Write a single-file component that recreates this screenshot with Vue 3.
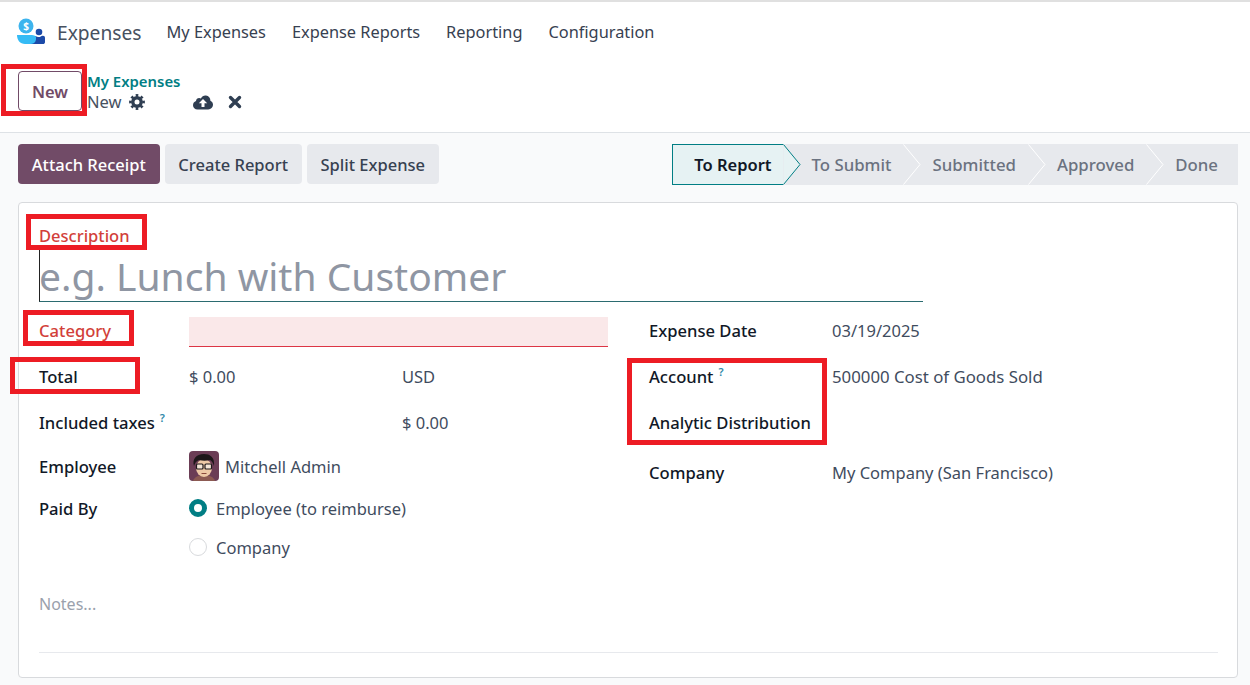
<script setup>
const steps = [
  { label: 'To Report', active: true },
  { label: 'To Submit' },
  { label: 'Submitted' },
  { label: 'Approved' },
  { label: 'Done', last: true },
]
const navItems = ['My Expenses', 'Expense Reports', 'Reporting', 'Configuration']
</script>

<template>
  <div class="page">
    <header class="navbar">
      <svg class="logo" viewBox="0 0 30 28" width="30" height="28" aria-hidden="true">
        <circle cx="10" cy="9" r="7.500" fill="#3db4ee" />
        <text x="10" y="12.500" text-anchor="middle" class="logo-s">$</text>
        <path d="M19 19c1 0 2 .8 3 1 2 .4 3-.8 4.500-1.200 1.500-.3 2.500.7 2.500 2V25c0 1.500-1 2-2 2H14z" fill="#1c4aa8" />
        <path d="M1 18h15c1.800 0 3 .8 4 1.800v2c0 3-2 5.200-5 5.200H9c-5 0-8-4-8-9z" fill="#35bbf5" />
        <circle cx="23" cy="15" r="3.300" fill="#1c4aa8" />
      </svg>
      <span class="app-name">Expenses</span>
      <nav class="nav-list">
        <a v-for="item in navItems" :key="item" class="nav-item">{{ item }}</a>
      </nav>
    </header>

    <section class="control-panel">
      <button class="btn-new">New</button>
      <div class="crumbs">
        <a class="crumb-link">My Expenses</a>
        <div class="crumb-current">
          <span>New</span>
          <svg class="ic-gear" viewBox="0 0 16 16" width="16" height="16" aria-hidden="true">
            <circle cx="8" cy="8" r="4.200" fill="none" stroke="#2f3e52" stroke-width="3.400" />
            <circle cx="8" cy="8" r="6.600" fill="none" stroke="#2f3e52" stroke-width="2.600" pathLength="32" stroke-dasharray="2 2" stroke-dashoffset="1" />
          </svg>
          <svg class="ic-cloud" viewBox="0 0 20 15" width="20" height="15" aria-hidden="true">
            <path d="M4.500 14.500C2 14.500 0 12.600 0 10.200c0-1.900 1.200-3.500 3-4.100C3.100 4.300 4.500 3 6.200 3c.6 0 1.200.2 1.700.5C8.900 1.500 10.800.2 13 .5c2.700.3 4.500 2.500 4.400 5.200 1.600.7 2.600 2.200 2.600 3.900 0 2.700-2.100 4.900-4.800 4.900z" fill="#2f3e52" />
            <path d="M10 4l4.200 4.200h-2.700V12h-3V8.200H5.800z" fill="#fff" />
          </svg>
          <svg class="ic-close" viewBox="0 0 14 14" width="14" height="14" aria-hidden="true">
            <path d="M2.500 2.500l9 9M11.500 2.500l-9 9" stroke="#2f3e52" stroke-width="3.400" stroke-linecap="round" />
          </svg>
        </div>
      </div>
    </section>

    <main class="content">
      <div class="toolbar">
        <div class="actions">
          <button class="btn btn-primary">Attach Receipt</button>
          <button class="btn">Create Report</button>
          <button class="btn">Split Expense</button>
        </div>
        <div class="statusbar">
          <div
            v-for="step in steps"
            :key="step.label"
            class="step"
            :class="{ 'step-active': step.active, 'step-last': step.last }"
          >
            <span>{{ step.label }}</span>
            <svg v-if="!step.last" class="chev" viewBox="0 0 18 41" width="18" height="41" aria-hidden="true">
              <path
                d="M0.500 0.500L17 20.500L0.500 40.500"
                :fill="step.active ? '#e6f2f3' : '#e7e9ed'"
                :stroke="step.active ? '#017e84' : '#ffffff'"
                stroke-width="1"
              />
            </svg>
          </div>
        </div>
      </div>

      <article class="sheet">
        <label class="title-label">Description</label>
        <div class="title-field">
          <input class="title-input" placeholder="e.g. Lunch with Customer" />
        </div>

        <div class="form-groups">
          <div class="group group-left">
            <div class="row row-46">
              <span class="label label-error">Category</span>
              <div class="input-error"></div>
            </div>
            <div class="row row-46">
              <span class="label">Total</span>
              <div class="amounts"><span class="amount">$ 0.00</span><span>USD</span></div>
            </div>
            <div class="row row-46">
              <span class="label">Included taxes<sup class="help">?</sup></span>
              <div class="amounts"><span class="amount"></span><span>$ 0.00</span></div>
            </div>
            <div class="row row-42">
              <span class="label">Employee</span>
              <div class="employee">
                <svg class="avatar" viewBox="0 0 30 30" width="30" height="30" aria-hidden="true">
                  <rect width="30" height="30" rx="4" fill="#6b3d55" />
                  <path d="M4 30c1-4 6-6 11-6s10 2 11 6z" fill="#8c5a52" />
                  <ellipse cx="15" cy="17" rx="8" ry="9" fill="#eec9a6" />
                  <path d="M5 15C3 8 7 3 15 3c6 0 11 3 10 12-1-3-2-5-4-6-4 1-7 1-11 0-3 1-4 3-5 6z" fill="#1d1719" />
                  <rect x="7.500" y="13" width="6.500" height="5" rx="1" fill="#f5e6d6" stroke="#1d1719" stroke-width="1.200" />
                  <rect x="16" y="13" width="6.500" height="5" rx="1" fill="#f5e6d6" stroke="#1d1719" stroke-width="1.200" />
                  <path d="M12.500 22.500h5" stroke="#8a4a3c" stroke-width="1" />
                </svg>
                <span>Mitchell Admin</span>
              </div>
            </div>
            <div class="row row-42">
              <span class="label">Paid By</span>
              <label class="radio-line"><i class="radio radio-on"></i>Employee (to reimburse)</label>
            </div>
            <div class="row row-36">
              <span></span>
              <label class="radio-line"><i class="radio"></i>Company</label>
            </div>
          </div>

          <div class="group group-right">
            <div class="row row-46">
              <span class="label">Expense Date</span>
              <span>03/19/2025</span>
            </div>
            <div class="row row-46">
              <span class="label">Account<sup class="help">?</sup></span>
              <span class="wide-value">500000 Cost of Goods Sold</span>
            </div>
            <div class="row row-46">
              <span class="label">Analytic Distribution</span>
              <span></span>
            </div>
            <div class="row row-54">
              <span class="label">Company</span>
              <span>My Company (San Francisco)</span>
            </div>
          </div>
        </div>

        <div class="notes">Notes...</div>
      </article>
    </main>

    <div class="mark mark-new"></div>
    <div class="mark mark-description"></div>
    <div class="mark mark-category"></div>
    <div class="mark mark-total"></div>
    <div class="mark mark-account"></div>
  </div>
</template>

<style>
html, body { margin: 0; background: #f9fafb; }
</style>

<style scoped>
.page {
  position: relative;
  width: 1250px;
  height: 685px;
  overflow: hidden;
  box-sizing: border-box;
  border-top: 2px solid #e0e0e0;
  background: #f9fafb;
  font-family: "Noto Sans", "Open Sans", sans-serif;
  font-size: 16.500px;
  color: #3f4c5e;
}
.navbar {
  display: flex;
  align-items: center;
  height: 60px;
  background: #fff;
  padding-left: 16px;
  box-sizing: border-box;
}
.logo { display: block; margin-top: -2px; }
.logo-s { font-size: 10px; font-weight: 700; fill: #fff; font-family: "Noto Sans", sans-serif; }
.app-name { font-size: 19.200px; margin-left: 11px; color: #47515f; }
.nav-list { display: flex; gap: 26px; margin-left: 25px; margin-top: -1px; }
.nav-item { color: #374151; font-size: 16.350px; }
.control-panel {
  display: flex;
  align-items: flex-start;
  background: #fff;
  border-bottom: 1px solid #dee2e6;
  padding-left: 18px;
  height: 70px;
}
.btn-new {
  width: 64px;
  height: 40px;
  margin-top: 9px;
  border: 1px solid #714b67;
  border-radius: 4px;
  background: #fff;
  color: #714b67;
  font: 600 16.500px "Noto Sans", sans-serif;
  padding: 0;
}
.crumbs { margin-left: 5px; margin-top: 9px; }
.crumb-link { display: block; color: #017e84; font-weight: 600; font-size: 14.900px; line-height: 20px; }
.crumb-current { display: flex; align-items: center; height: 22px; line-height: 22px; color: #47515f; }
.ic-gear { margin-left: 7px; }
.ic-cloud { margin-left: 48px; }
.ic-close { margin-left: 15px; }
.content { padding: 11px 12px 0 18px; }
.toolbar { display: flex; justify-content: space-between; align-items: flex-start; }
.actions { display: flex; gap: 5px; }
.btn {
  height: 40px;
  padding: 0 13.750px;
  border: 0;
  border-radius: 4px;
  background: #e7e9ed;
  color: #374151;
  font: 500 16.500px "Noto Sans", sans-serif;
}
.btn-primary { background: #714b67; color: #fff; }
.statusbar { display: flex; height: 41px; background: #e7e9ed; }
.step {
  position: relative;
  display: flex;
  align-items: center;
  padding: 0 12px 0 29px;
  font-weight: 500;
  font-size: 16.800px;
  color: #6b7280;
}
.step-last { padding-right: 20px; }
.step-active {
  padding-left: 21px;
  padding-right: 11px;
  color: #111827;
  font-weight: 600;
  font-size: 16.500px;
  background: #e6f2f3;
  border: 1px solid #017e84;
  border-right: 0;
  box-sizing: border-box;
}
.chev { position: absolute; top: 0; left: 100%; z-index: 1; }
.step-active .chev { top: -1px; }
.sheet {
  height: 476px;
  margin-top: 17px;
  box-sizing: border-box;
  background: #fff;
  border: 1px solid #d8dadd;
  border-radius: 4px;
  padding: 21px 19px 0 20px;
}
.title-label { display: block; color: #d23f3a; font-weight: 500; line-height: 24px; }
.title-field {
  height: 52px;
  width: 883px;
  margin-top: 1px;
  border-left: 1px solid #222;
  border-bottom: 1px solid #2b6b70;
}
.title-input {
  display: block;
  width: calc(100% + 1px);
  height: 52px;
  margin-left: -1px;
  border: 0;
  outline: 0;
  padding: 0;
  background: transparent;
  font: 400 39px "Noto Sans", sans-serif;
  color: #374151;
  box-sizing: border-box;
}
.title-input::placeholder { color: #8f96a3; opacity: 1; }
.form-groups { display: flex; margin-top: 5px; gap: 41px; }
.group { width: 569px; }
.row { display: grid; grid-template-columns: 150px 1fr; align-items: center; }
.group-right .row { grid-template-columns: 183px 1fr; }
.row-46 { height: 46px; }
.row-42 { height: 42px; }
.row-36 { height: 36px; }
.row-54 { height: 54px; }
.label { color: #111827; font-weight: 500; font-size: 16.600px; }
.label-error { color: #d23f3a; }
.wide-value { font-size: 16.800px; }
.input-error { height: 30px; margin-top: 3px; background: #fae8e9; border-bottom: 1px solid #dc3545; box-sizing: border-box; }
.help { color: #2f88a8; font-size: 11px; font-weight: 600; margin-left: 5px; line-height: 0; }
.amounts { display: flex; }
.amount { width: 213px; }
.employee { display: flex; align-items: center; gap: 6px; }
.avatar { display: block; }
.radio-line { display: flex; align-items: center; gap: 9px; }
.radio {
  display: block;
  width: 18px;
  height: 18px;
  box-sizing: border-box;
  border: 1px solid #d8dadd;
  border-radius: 50%;
  background: #fff;
}
.radio-on { border: 5.500px solid #017e84; }
.notes {
  margin-top: 27px;
  height: 60px;
  line-height: 24px;
  color: #9aa1ac;
  border-bottom: 1px solid #e7e9ed;
  font-size: 16px;
}
.mark { position: absolute; border: 5px solid #ed1c24; box-sizing: border-box; pointer-events: none; }
.mark-new { left: 1px; top: 62px; width: 86px; height: 52px; }
.mark-description { left: 26px; top: 212px; width: 121px; height: 36px; }
.mark-category { left: 23px; top: 308px; width: 111px; height: 36px; }
.mark-total { left: 10px; top: 355px; width: 130px; height: 37px; }
.mark-account { left: 627px; top: 356px; width: 200px; height: 87px; }
</style>
